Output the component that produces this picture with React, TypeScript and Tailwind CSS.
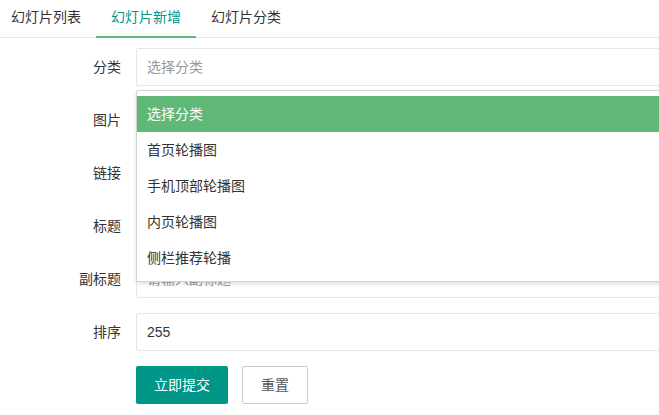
import React from "react";

const font = "font-['Liberation_Sans','Noto_Sans_CJK_SC',sans-serif]";

function Row({ label, children }: { label: string; children: React.ReactNode }) {
  return (
    <div className="flex mb-[15px]">
      <label className="w-[136px] shrink-0 pr-[15px] text-right leading-[38px] text-[#333]">{label}</label>
      <div className="flex-1 relative">{children}</div>
    </div>
  );
}

const inputCls =
  "block w-full h-[38px] border border-[#e6e6e6] bg-white pl-[10px] text-[14px] text-[#333] outline-none placeholder:text-[#999] rounded-[2px]";

export default function App() {
  const options = ["选择分类", "首页轮播图", "手机顶部轮播图", "内页轮播图", "侧栏推荐轮播"];
  return (
    <div className={`w-[659px] h-[415px] overflow-hidden bg-white text-[14px] text-[#333] ${font}`}>
      <div className="flex h-[38px] border-b border-[#e6e6e6] w-[700px]">
        <div className="flex ml-[-4px]">
          <div className="w-[100px] text-center leading-[35px] text-[#333]">幻灯片列表</div>
          <div className="w-[100px] text-center leading-[35px] text-[#009688] relative">
            幻灯片新增
            <span className="absolute left-0 right-0 bottom-[-1px] h-[2px] bg-[#5FB878]" />
          </div>
          <div className="w-[100px] text-center leading-[35px] text-[#333]">幻灯片分类</div>
        </div>
      </div>
      <div className="pt-[10px] w-[700px]">
        <Row label="分类">
          <input className={`${inputCls} border-[#d2d2d2]`} placeholder="选择分类" readOnly />
          <div className="absolute z-10 top-[42px] left-0 right-0 bg-white border border-[#d2d2d2] py-[5px] shadow-[0_2px_4px_rgba(0,0,0,0.12)] rounded-[2px]">
            {options.map((o, i) => (
              <div
                key={o}
                className={
                  i === 0
                    ? "px-[10px] leading-[36px] bg-[#5FB878] text-white"
                    : "px-[10px] leading-[36px] text-[#333]"
                }
              >
                {o}
              </div>
            ))}
          </div>
        </Row>
        <Row label="图片">
          <input className={inputCls} placeholder="请上传图片" />
        </Row>
        <Row label="链接">
          <input className={inputCls} placeholder="请输入链接" />
        </Row>
        <Row label="标题">
          <input className={inputCls} placeholder="请输入标题" />
        </Row>
        <Row label="副标题">
          <input className={inputCls} placeholder="请输入副标题" />
        </Row>
        <Row label="排序">
          <input className={inputCls} defaultValue="255" />
        </Row>
        <div className="flex pl-[136px]">
          <button className="h-[38px] px-[18px] bg-[#009688] text-white rounded-[2px] leading-[38px]">立即提交</button>
          <button className="ml-[14px] h-[38px] px-[18px] bg-white border border-[#c9c9c9] text-[#555] rounded-[2px] leading-[36px]">
            重置
          </button>
        </div>
      </div>
    </div>
  );
}
